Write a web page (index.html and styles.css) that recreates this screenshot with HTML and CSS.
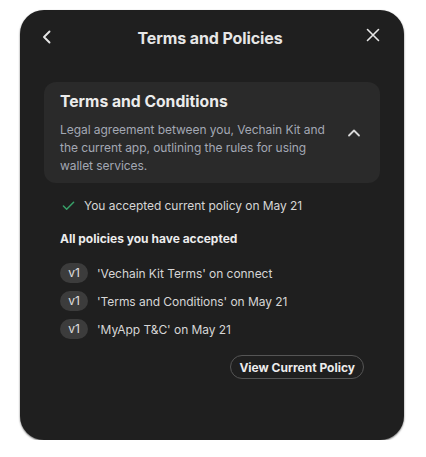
FILE: index.html
```html
<!DOCTYPE html>
<html>
<head>
<meta charset="utf-8">
<link rel="stylesheet" href="styles.css">
</head>
<body>
<div class="modal">
  <div class="header">
    <span class="icon-btn back">
      <svg width="14" height="14" viewBox="0 0 14 14"><path d="M9.5 1.5 L4 7 L9.5 12.5" fill="none" stroke="#e6e6e6" stroke-width="1.9" stroke-linecap="round" stroke-linejoin="round"/></svg>
    </span>
    <div class="title">Terms and Policies</div>
    <span class="icon-btn close">
      <svg width="14" height="14" viewBox="0 0 14 14"><path d="M1.5 1.5 L12.5 12.5 M12.5 1.5 L1.5 12.5" fill="none" stroke="#e6e6e6" stroke-width="1.6" stroke-linecap="round"/></svg>
    </span>
  </div>
  <div class="body">
    <div class="card">
      <div class="card-text">
        <div class="card-title">Terms and Conditions</div>
        <div class="card-desc">Legal agreement between you, Vechain Kit and the current app, outlining the rules for using wallet services.</div>
      </div>
      <span class="chev">
        <svg width="16" height="16" viewBox="0 0 16 16"><path d="M3 10.5 L8 5.5 L13 10.5" fill="none" stroke="#d8d8d8" stroke-width="1.8" stroke-linecap="round" stroke-linejoin="round"/></svg>
      </span>
    </div>
    <div class="section">
      <div class="accepted">
        <svg class="check" width="13" height="13" viewBox="0 0 14 14"><path d="M1.5 7.5 L5 11 L12.5 3.5" fill="none" stroke="#38a169" stroke-width="1.6" stroke-linecap="round" stroke-linejoin="round"/></svg>
        <span>You accepted current policy on May 21</span>
      </div>
      <div class="subhead">All policies you have accepted</div>
      <div class="list">
        <div class="row"><span class="badge">v1</span><span>'Vechain Kit Terms' on connect</span></div>
        <div class="row"><span class="badge">v1</span><span>'Terms and Conditions' on May 21</span></div>
        <div class="row"><span class="badge">v1</span><span>'MyApp T&amp;C' on May 21</span></div>
      </div>
      <div class="actions">
        <button class="btn">View Current Policy</button>
      </div>
    </div>
  </div>
</div>
</body>
</html>
```
FILE: styles.css
```css
* { box-sizing: border-box; }
html, body { margin: 0; padding: 0; background: #ffffff; }
body {
  font-family: Inter, "Noto Sans", sans-serif;
  padding: 10px 0 0 20px;
}
.modal {
  width: 384px;
  height: 430px;
  background: #1f1f1f;
  border-radius: 24px;
  box-shadow: 0 1px 2px rgba(0,0,0,0.6);
  padding: 0 24px;
}
.header {
  height: 54px;
  display: flex;
  align-items: center;
  justify-content: space-between;
  padding-top: 2px;
}
.icon-btn {
  width: 20px;
  height: 20px;
  display: flex;
  align-items: center;
  justify-content: center;
}
.back { margin-left: -7px; margin-top: -2px; }
.close { margin-right: -3px; margin-top: -6px; }
.title {
  color: #e6e6e6;
  font-size: 16px;
  font-weight: 700;
  letter-spacing: -0.1px;
}
.body { padding-top: 18px; }
.card {
  background: #2a2a2a;
  border-radius: 12px;
  padding: 8px 16px 8px 16px;
  display: flex;
  align-items: center;
  gap: 16px;
}
.card-text { flex: 1; }
.card-title {
  color: #ececec;
  font-size: 15.7px;
  font-weight: 700;
  line-height: 24px;
  margin-bottom: 7px;
}
.card-desc {
  color: #a3a8b4;
  font-size: 12px;
  letter-spacing: -0.05px;
  line-height: 18px;
}
.chev { width: 20px; display: flex; justify-content: center; }
.section { padding: 0 16px; }
.accepted {
  margin-top: 12px;
  display: flex;
  align-items: center;
  gap: 9px;
  height: 20px;
  color: #d6d6d6;
  font-size: 12px;
  letter-spacing: -0.05px;
  padding-left: 2px;
}
.check { flex: none; }
.subhead {
  margin-top: 14px;
  color: #ececec;
  font-size: 12px;
  font-weight: 700;
  line-height: 20px;
}
.list {
  margin-top: 14px;
  display: flex;
  flex-direction: column;
  gap: 8px;
}
.row {
  display: flex;
  align-items: center;
  gap: 9px;
  height: 20px;
  color: #d6d6d6;
  font-size: 12px;
  letter-spacing: -0.05px;
}
.badge {
  width: 28px;
  height: 20px;
  border-radius: 10px;
  background: #3c3c3c;
  color: #e0e0e0;
  font-size: 12px;
  display: flex;
  align-items: center;
  justify-content: center;
  padding-bottom: 2px;
}
.actions {
  margin-top: 16px;
  display: flex;
  justify-content: flex-end;
}
.btn {
  font-family: Inter, "Noto Sans", sans-serif;
  height: 24px;
  border: 1px solid #555555;
  border-radius: 12px;
  background: transparent;
  color: #ececec;
  font-size: 12px;
  font-weight: 700;
  padding: 0 8px;
}
```
